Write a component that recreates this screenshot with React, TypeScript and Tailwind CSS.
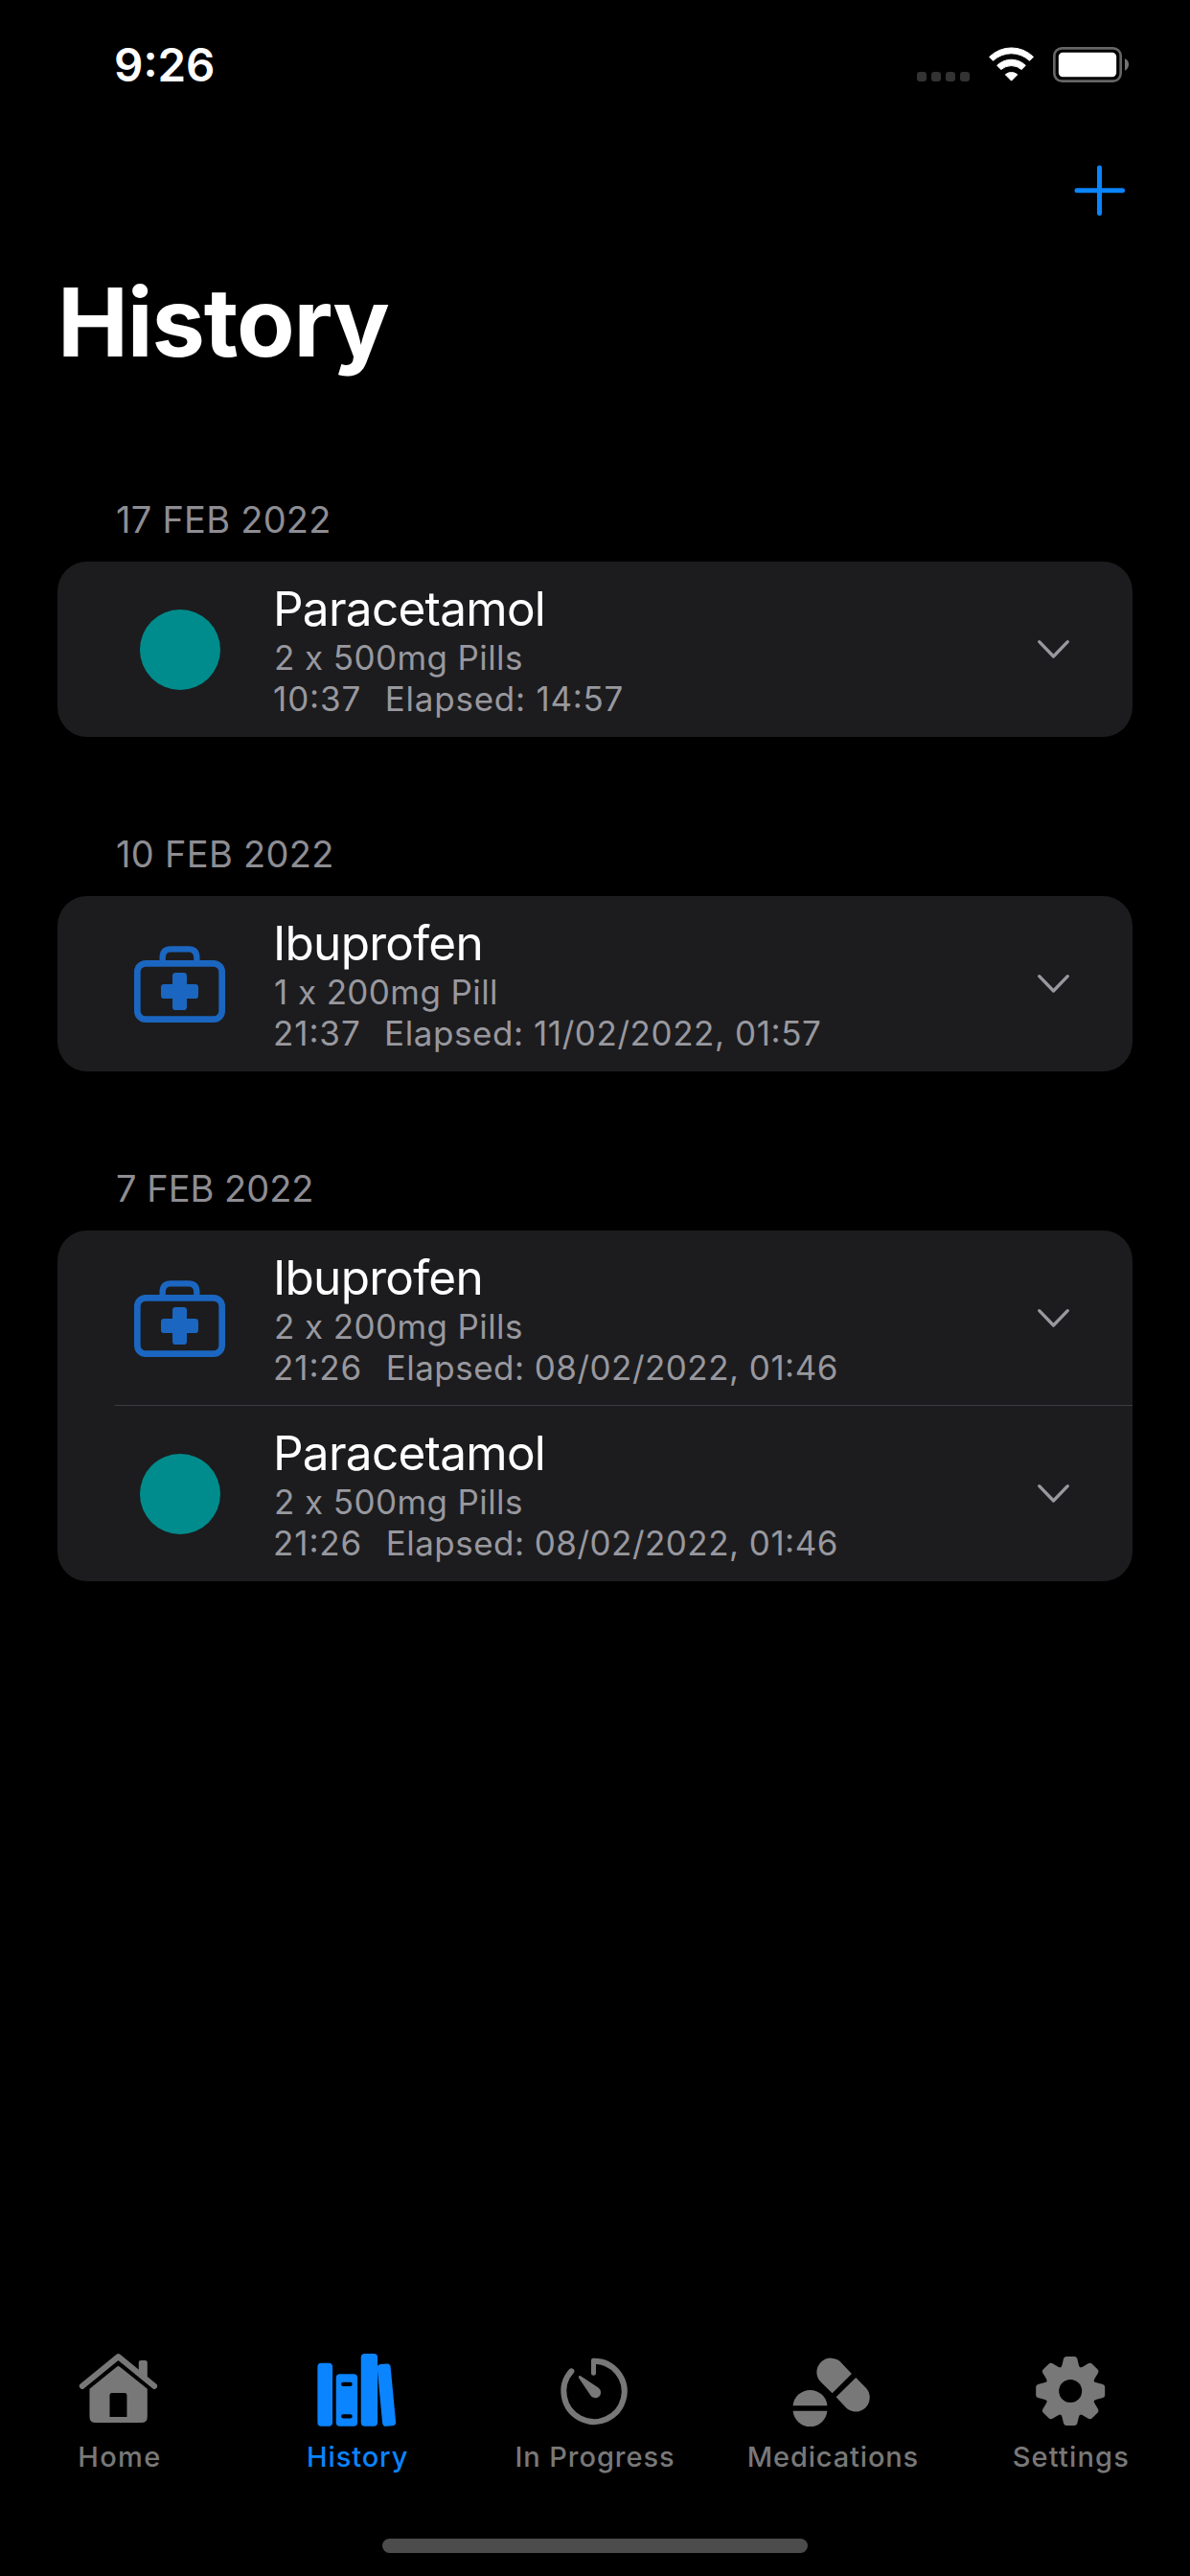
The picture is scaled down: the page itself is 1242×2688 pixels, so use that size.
import type { ReactNode } from "react";

type Entry = {
  name: string;
  icon: "circle" | "kit";
  dose: string;
  time: string;
  elapsed: string;
  elapsedSpacing?: string;
};

type Section = { date: string; dateSpacing: string; entries: Entry[] };

const sections: Section[] = [
  {
    date: "17 FEB 2022",
    dateSpacing: "tracking-[0.25px]",
    entries: [
      {
        name: "Paracetamol",
        icon: "circle",
        dose: "2 x 500mg Pills",
        time: "10:37",
        elapsed: "Elapsed: 14:57",
        elapsedSpacing: "tracking-[0.75px]",
      },
    ],
  },
  {
    date: "10 FEB 2022",
    dateSpacing: "tracking-[0.3px]",
    entries: [
      {
        name: "Ibuprofen",
        icon: "kit",
        dose: "1 x 200mg Pill",
        time: "21:37",
        elapsed: "Elapsed: 11/02/2022, 01:57",
        elapsedSpacing: "tracking-[0.57px]",
      },
    ],
  },
  {
    date: "7 FEB 2022",
    dateSpacing: "tracking-[0px]",
    entries: [
      { name: "Ibuprofen", icon: "kit", dose: "2 x 200mg Pills", time: "21:26", elapsed: "Elapsed: 08/02/2022, 01:46" },
      { name: "Paracetamol", icon: "circle", dose: "2 x 500mg Pills", time: "21:26", elapsed: "Elapsed: 08/02/2022, 01:46" },
    ],
  },
];

function WifiIcon() {
  return (
    <svg className="h-[37.33px] w-[49.33px]" viewBox="393 85 148 112" fill="#fff" stroke="#fff" strokeWidth="3" strokeLinejoin="round">
      <path d="M398 119A98 98 0 0 1 535.500 119L523.500 131A83 83 0 0 0 409.500 131Z" />
      <path d="M422 146A63 63 0 0 1 511 146L498.500 158.500A49 49 0 0 0 434.500 158.500Z" />
      <path d="M448 174.500A29 29 0 0 1 485.500 174.500L466.750 193.500Z" />
    </svg>
  );
}

function BatteryIcon() {
  return (
    <svg className="h-[39px] w-[82px]" viewBox="594 84 246 117">
      <rect x="601" y="91" width="208" height="103" rx="24" fill="none" stroke="#666" strokeWidth="8" />
      <rect x="614.500" y="104.500" width="181" height="76" rx="13" fill="#fff" />
      <path d="M822 123Q834 129 834 142T822 161Z" fill="#737373" />
    </svg>
  );
}

function KitIcon() {
  return (
    <svg className="h-[80px] w-[95px]" viewBox="60 81 285 240">
      <g fill="none" stroke="#1b66c0">
        <rect x="70" y="136" width="265" height="175" rx="26" strokeWidth="20" />
        <path d="M149 130V118Q149 91 175 91H230Q256 91 256 118V130" strokeWidth="19" />
      </g>
      <g fill="#1b66c0">
        <rect x="180" y="165" width="45" height="117" rx="10" />
        <rect x="144" y="201" width="117" height="45" rx="10" />
      </g>
    </svg>
  );
}

function ChevronDown() {
  return (
    <svg className="h-[21px] w-[35px]" viewBox="0 0 35 21" fill="none" stroke="#98989f" strokeWidth="3.300" strokeLinecap="round" strokeLinejoin="round">
      <path d="M2.700 2.700L17.500 18L32.300 2.700" />
    </svg>
  );
}

function HomeIcon() {
  return (
    <svg className="size-[90px]" viewBox="57.600 60 270 270" fill="#787878">
      <path d="M78 179.500L191 87.500L304 179.500" fill="none" stroke="#787878" strokeWidth="18" strokeLinecap="round" strokeLinejoin="round" />
      <path d="M255 138V106Q255 99 262 99H275Q282 99 282 106V160Z" />
      <path
        fillRule="evenodd"
        d="M187 118.500Q191 115.500 195 118.500L282 188V275Q282 294 263 294H120Q101 294 101 275V188ZM164 276H218V208Q218 201 211 201H171Q164 201 164 208Z"
      />
    </svg>
  );
}

function BooksIcon() {
  return (
    <svg className="size-[90px]" viewBox="802.800 60 270 270" fill="#0a84ff">
      <rect x="813" y="107" width="47" height="198" rx="12" />
      <path
        fillRule="evenodd"
        d="M883 142H926Q938 142 938 154V293Q938 305 926 305H883Q871 305 871 293V154Q871 142 883 142ZM893.500 167A6.500 6.500 0 0 0 893.500 180H915.500A6.500 6.500 0 0 0 915.500 167ZM893.500 267.500A6.500 6.500 0 0 0 893.500 280.500H915.500A6.500 6.500 0 0 0 915.500 267.500Z"
      />
      <rect x="949" y="78" width="52" height="227" rx="12" />
      <rect x="1008" y="110" width="42" height="195" rx="12" transform="rotate(-5.400 1029 207.500)" />
    </svg>
  );
}

function TimerIcon() {
  return (
    <svg className="size-[90px]" viewBox="228 60 270 270" fill="none" stroke="#787878" strokeLinecap="round" strokeLinejoin="round">
      <path d="M360 101A95 95 0 1 1 289 133" strokeWidth="18" />
      <path d="M358.500 139V99.500" strokeWidth="15" />
      <path d="M312.500 154.500L348.500 207.500A17.500 17.500 0 1 0 373.500 184.500L319 148.500Q309 144 312.500 154.500Z" fill="#787878" stroke="none" />
    </svg>
  );
}

function PillsIcon() {
  return (
    <svg className="size-[90px]" viewBox="973.200 60 270 270" fill="#787878">
      <path d="M984 240.500A54 54 0 0 1 1091.500 240.500Z" />
      <path d="M984 257.500A54 54 0 0 0 1091.500 257.500Z" />
      <path d="M1168 141L1136 107.500A44 44 0 1 0 1074 169.500L1107 202Z" />
      <path d="M1181 153L1214 187A44 44 0 0 1 1152 249L1119 214Z" />
    </svg>
  );
}

function GearIcon() {
  return (
    <svg className="size-[90px]" viewBox="338.400 60 270 270">
      <g transform="translate(471 195)" fill="#787878">
        <circle r="79" />
        {[0, 45, 90, 135, 180, 225, 270, 315].map((angle) => (
          <path
            key={angle}
            transform={`rotate(${angle})`}
            d="M-34 -71Q-28 -73 -26 -82L-22 -99Q-20 -108 -12 -108H12Q20 -108 22 -99L26 -82Q28 -73 34 -71Z"
          />
        ))}
        <circle r="36" fill="#000" />
      </g>
    </svg>
  );
}

const tabs: { label: string; icon: ReactNode; active?: boolean; spacing: string }[] = [
  { label: "Home", icon: <HomeIcon />, spacing: "tracking-[1.4px] pl-[1.5px]" },
  { label: "History", icon: <BooksIcon />, active: true, spacing: "tracking-[0.9px] pl-px" },
  { label: "In Progress", icon: <TimerIcon />, spacing: "tracking-[0.95px]" },
  { label: "Medications", icon: <PillsIcon />, spacing: "tracking-[0.85px]" },
  { label: "Settings", icon: <GearIcon />, spacing: "tracking-[1.15px]" },
];

function Row({ entry, divided }: { entry: Entry; divided: boolean }) {
  return (
    <li className="pl-[60px]">
      <div className={`flex h-[183px] ${divided ? "border-b border-[#3d3d41]" : ""}`}>
        <div className="flex h-[184px] w-[135px] shrink-0 items-center justify-center">
          {entry.icon === "circle" ? <span className="size-[84px] rounded-full bg-[#008c8c]" /> : <KitIcon />}
        </div>
        <div className="ml-[30px] flex-1 whitespace-nowrap pt-[19px] text-[35px] leading-[43px] text-[#98989f]">
          <h3 className="text-[49.5px] leading-[60px] tracking-[-0.74px] text-white">{entry.name}</h3>
          <p className="ml-px tracking-[0.4px]">{entry.dose}</p>
          <p className="flex gap-[24.5px] [font-feature-settings:'calt'_1]">
            <span className="tracking-[0.9px]">{entry.time}</span>
            <span className={entry.elapsedSpacing ?? "tracking-[0.47px]"}>{entry.elapsed}</span>
          </p>
        </div>
        <div className="flex h-[183px] items-center pr-[65px]">
          <ChevronDown />
        </div>
      </div>
    </li>
  );
}

export default function App() {
  return (
    <div className="flex h-[2688px] w-[1242px] flex-col overflow-hidden bg-black font-['Inter',sans-serif] text-white">
      <header className="flex h-[132px] shrink-0 justify-between pl-[119px] pr-[62px]">
        <span className="mt-[38px] text-[47.5px] font-semibold leading-[60px] [font-feature-settings:'calt'_1]">9:26</span>
        <div className="flex pt-[48px]">
          <div className="mr-[19px] mt-[27px] flex gap-[5px]">
            {[0, 1, 2, 3].map((dot) => (
              <span key={dot} className="size-[10px] rounded-[3px] bg-[#333]" />
            ))}
          </div>
          <div className="mr-[17.67px]">
            <WifiIcon />
          </div>
          <BatteryIcon />
        </div>
      </header>

      <div className="flex h-[144px] shrink-0 justify-end pr-[68.5px] pt-[40px]">
        <svg className="size-[53px]" viewBox="0 0 53 53" fill="none" stroke="#0a84ff" strokeWidth="5" strokeLinecap="round">
          <path d="M26.500 3V50.500M3 26.750H50.500" />
        </svg>
      </div>

      <h1 className="ml-[60px] h-[120px] shrink-0 text-[99px] font-bold leading-[120px] tracking-[-1.15px]">History</h1>

      <main className="mt-[123px] flex flex-1 flex-col gap-[99px] px-[60px]">
        {sections.map((section) => (
          <section key={section.date}>
            <h2 className={`ml-[61px] text-[38px] leading-[46px] text-[#8d8d93] ${section.dateSpacing}`}>{section.date}</h2>
            <ul className="mt-[21px] overflow-hidden rounded-[31px] bg-[#1c1c1e]">
              {section.entries.map((entry, i) => (
                <Row key={entry.name} entry={entry} divided={i < section.entries.length - 1} />
              ))}
            </ul>
          </section>
        ))}
      </main>

      <nav className="grid h-[199px] shrink-0 grid-cols-5">
        {tabs.map((tab) => (
          <a key={tab.label} className={`flex flex-col items-center ${tab.active ? "text-[#0a84ff]" : "text-[#787878]"}`}>
            {tab.icon}
            <span className={`mt-[6px] text-[29px] font-medium leading-[36px] ${tab.spacing}`}>{tab.label}</span>
          </a>
        ))}
      </nav>

      <div className="flex h-[39px] shrink-0 justify-center">
        <div className="h-[15px] w-[444px] rounded-full bg-[#4c4c4c]" />
      </div>
    </div>
  );
}
